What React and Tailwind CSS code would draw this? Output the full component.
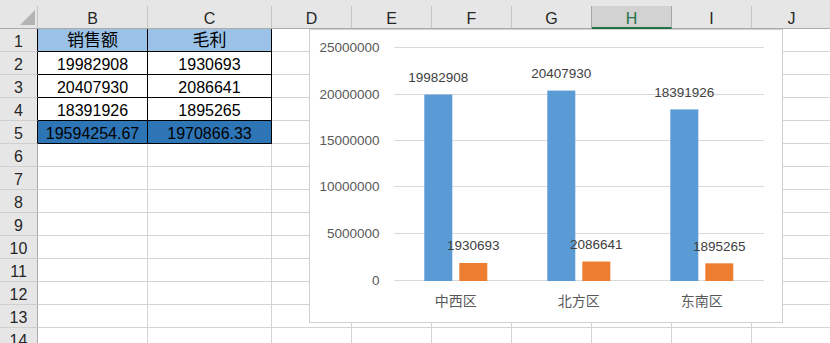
import React from "react";

const cols = [
  { k: "B", w: "w-[110px]" },
  { k: "C", w: "w-[124px]" },
  { k: "D", w: "w-[80px]" },
  { k: "E", w: "w-[80px]" },
  { k: "F", w: "w-[80px]" },
  { k: "G", w: "w-[80px]" },
  { k: "H", w: "w-[80px]" },
  { k: "I", w: "w-[80px]" },
  { k: "J", w: "w-[80px]" },
];

const data = {
  1: ["销售额", "毛利"],
  2: ["19982908", "1930693"],
  3: ["20407930", "2086641"],
  4: ["18391926", "1895265"],
  5: ["19594254.67", "1970866.33"],
};

const rows = Array.from({ length: 14 }, (_, i) => i + 1);

function HeaderRow() {
  return (
    <div className="flex h-[29px] items-end bg-[#e6e6e6]">
      <div className="w-[38px] h-[23px] shrink-0 border-r border-b border-r-[#c6c6c6] border-b-[#ababab] flex justify-end items-end pr-[2px] pb-[3px]">
        <svg width="15" height="15" viewBox="0 0 15 15">
          <polygon points="15,0 15,15 0,15" fill="#b4b4b4" />
        </svg>
      </div>
      {cols.map((c) => {
        const sel = c.k === "H";
        const beforeSel = c.k === "G";
        return (
          <div
            key={c.k}
            className={
              c.w +
              " h-[23px] shrink-0 flex items-center justify-center pt-[4px] border-r " +
              (sel
                ? "bg-[#d2d2d2] border-r-[#a6a6a6] border-b-2 border-b-[#217346] text-[#217346]"
                : "border-b border-b-[#ababab] text-[#262626] " +
                  (beforeSel ? "border-r-[#a6a6a6]" : "border-r-[#c6c6c6]"))
            }
          >
            {c.k}
          </div>
        );
      })}
    </div>
  );
}

function Row({ n }) {
  const inTable = n <= 5;
  const fill = n === 1 ? "bg-[#9bc2e6]" : n === 5 ? "bg-[#2e75b6]" : "bg-white";
  return (
    <div className="flex h-[23px]">
      <div
        className={
          "w-[38px] h-full shrink-0 bg-[#e6e6e6] border-b border-b-[#cfcfcf] border-r flex items-center justify-center pt-[3px] text-[#262626] " +
          (inTable ? "border-r-black" : "border-r-[#ababab]")
        }
      >
        {n}
      </div>
      {cols.map((c, i) => {
        const tbl = inTable && i < 2;
        const val = tbl ? data[n][i] : "";
        return (
          <div
            key={c.k}
            className={
              c.w +
              " h-full shrink-0 border-r border-b flex items-center justify-center " +
              (tbl
                ? "border-black text-black " + fill + (n === 1 ? " text-[17px] pt-[1px]" : " pt-[3px]")
                : "border-[#d4d4d4] bg-white")
            }
          >
            {val}
          </div>
        );
      })}
    </div>
  );
}

const K = 46.65 / 5000000;
const base = 252;
const cats = [
  { name: "中西区", a: 19982908, b: 1930693 },
  { name: "北方区", a: 20407930, b: 2086641 },
  { name: "东南区", a: 18391926, b: 1895265 },
];
const gridYs = [
  { v: "25000000", y: 18.5 },
  { v: "20000000", y: 65.5 },
  { v: "15000000", y: 111.5 },
  { v: "10000000", y: 157.5 },
  { v: "5000000", y: 204.5 },
  { v: "0", y: 251.5 },
];

function Chart() {
  const x0 = 85.3;
  const cw = 123;
  return (
    <div className="absolute left-[309px] top-[29px] w-[474px] h-[294px] border border-[#d0d0d0] bg-white">
      <svg
        className="absolute -left-px -top-px"
        width="474"
        height="294"
        viewBox="0 0 474 294"
      >
        {gridYs.map((g) => (
          <g key={g.v}>
            <line x1="85" x2="455" y1={g.y} y2={g.y} stroke="#d9d9d9" strokeWidth="1" />
            <text
              x="70.5"
              y={g.y}
              textAnchor="end"
              dominantBaseline="central"
              fill="#595959"
              fontSize="13.5"
            >
              {g.v}
            </text>
          </g>
        ))}
        {cats.map((c, i) => {
          const bx = x0 + i * cw + 30;
          const ox = bx + 35;
          const ha = c.a * K;
          const hb = c.b * K;
          return (
            <g key={c.name}>
              <rect x={bx} y={base - ha} width="28" height={ha} fill="#5b9bd5" />
              <rect x={ox} y={base - hb} width="28" height={hb} fill="#ed7d31" />
              <text
                x={bx + 14}
                y={base - ha - 17}
                textAnchor="middle"
                dominantBaseline="central"
                fill="#404040"
                fontSize="13.5"
              >
                {c.a}
              </text>
              <text
                x={ox + 14}
                y={base - hb - 17}
                textAnchor="middle"
                dominantBaseline="central"
                fill="#404040"
                fontSize="13.5"
              >
                {c.b}
              </text>
              <text
                x={x0 + i * cw + cw / 2}
                y="272"
                textAnchor="middle"
                dominantBaseline="central"
                fill="#595959"
                fontSize="14"
              >
                {c.name}
              </text>
            </g>
          );
        })}
      </svg>
    </div>
  );
}

export default function App() {
  return (
    <div className="relative w-[830px] h-[343px] overflow-hidden bg-white text-[16px] leading-none font-['Liberation_Sans','Noto_Sans_CJK_SC',sans-serif]">
      <HeaderRow />
      {rows.map((n) => (
        <Row key={n} n={n} />
      ))}
      <Chart />
    </div>
  );
}
